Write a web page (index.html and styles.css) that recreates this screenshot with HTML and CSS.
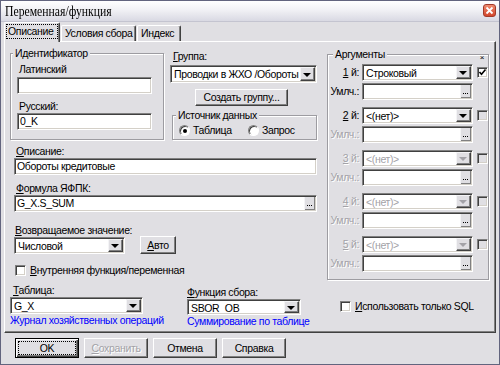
FILE: index.html
```html
<!DOCTYPE html>
<html>
<head>
    <meta charset="utf-8">
    <title>Переменная/функция</title>
    <link rel="stylesheet" href="styles.css">
</head>
<body>
    <div class="window">
        <div class="titlebar">
            <span class="title">Переменная/функция</span>
            <span class="close-btn">
                <svg viewBox="0 0 13 13" width="13" height="13"><path d="M3.5 3.5l6 6M9.5 3.5l-6 6" stroke="#fff" stroke-width="1.8"/></svg>
            </span>
        </div>

        <div class="client">
            <div class="tabs">
                <div class="tab active"><span class="focus">Описание</span></div>
                <div class="tab tab-cond">Условия сбора</div>
                <div class="tab tab-index">Индекс</div>
            </div>

            <div class="panel">
                <div class="col-left">
                    <div class="top">
                        <fieldset class="group ident">
                            <legend>Идентификатор</legend>
                            <div class="label ident-lbl">Латинский</div>
                            <div class="edit ident-edit"></div>
                            <div class="label ident-lbl ru">Русский:</div>
                            <div class="edit ident-edit">0_K</div>
                        </fieldset>

                        <div class="group-col">
                            <div class="label grp-lbl"><u>Г</u>руппа:</div>
                            <div class="combo grp-combo">
                                <span class="value">Проводки в ЖХО /Обороты</span>
                                <span class="drop"></span>
                            </div>
                            <div class="btn btn-create">Создать группу...</div>
                            <fieldset class="group source">
                                <legend>Источник данных</legend>
                                <div class="radios">
                                    <span class="radio checked"></span><span class="radio-text first">Таблица</span>
                                    <span class="radio"></span><span class="radio-text">Запрос</span>
                                </div>
                            </fieldset>
                        </div>
                    </div>

                    <div class="label field-lbl desc-lbl"><u>О</u>писание:</div>
                    <div class="edit wide">Обороты кредитовые</div>

                    <div class="label field-lbl formula-lbl"><u>Ф</u>ормула ЯФПК:</div>
                    <div class="edit wide with-btn">
                        <span class="value">G_X.S_SUM</span>
                        <span class="dots"></span>
                    </div>

                    <div class="label field-lbl ret-lbl"><u>В</u>озвращаемое значение:</div>
                    <div class="ret-row">
                        <div class="combo ret-combo">
                            <span class="value">Числовой</span>
                            <span class="drop"></span>
                        </div>
                        <div class="btn btn-auto"><span><u>А</u>вто</span></div>
                    </div>

                    <div class="check-row inner-check">
                        <span class="check"></span>
                        <span><u>В</u>нутренняя функция/переменная</span>
                    </div>

                    <div class="bottom">
                        <div class="table-col">
                            <div class="label"><u>Т</u>аблица:</div>
                            <div class="combo table-combo">
                                <span class="value">G_X</span>
                                <span class="drop"></span>
                            </div>
                            <div class="link">Журнал хозяйственных операций</div>
                        </div>
                        <div class="func-col">
                            <div class="label"><u>Ф</u>ункция сбора:</div>
                            <div class="combo func-combo">
                                <span class="value">SBOR_OB</span>
                                <span class="drop"></span>
                            </div>
                            <div class="link">Суммирование по таблице</div>
                        </div>
                    </div>
                </div>

                <div class="col-right">
                    <fieldset class="group args">
                        <legend>Аргументы</legend>
                        <div class="col-mark">×</div>

                        <div class="arg-row">
                            <span class="arg-label"><u>1</u> й:</span>
                            <div class="combo arg-field"><span class="value">Строковый</span><span class="drop"></span></div>
                            <span class="check small">
                                <svg viewBox="0 0 9 9" width="9" height="9"><path d="M1.5 4l2 2.2L7.5 1.5" fill="none" stroke="#000" stroke-width="1.6"/></svg>
                            </span>
                        </div>
                        <div class="arg-row def">
                            <span class="arg-label">Умлч.:</span>
                            <div class="edit arg-field with-btn"><span class="value"></span><span class="dots"></span></div>
                        </div>

                        <div class="arg-row">
                            <span class="arg-label"><u>2</u> й:</span>
                            <div class="combo arg-field"><span class="value">&lt;(нет)&gt;</span><span class="drop"></span></div>
                            <span class="check small off"></span>
                        </div>
                        <div class="arg-row def">
                            <span class="arg-label disabled">Умлч.:</span>
                            <div class="edit arg-field with-btn"><span class="value"></span><span class="dots"></span></div>
                        </div>

                        <div class="arg-row">
                            <span class="arg-label disabled"><u>3</u> й:</span>
                            <div class="combo arg-field dim"><span class="value">&lt;(нет)&gt;</span><span class="drop"></span></div>
                            <span class="check small off"></span>
                        </div>
                        <div class="arg-row def">
                            <span class="arg-label disabled">Умлч.:</span>
                            <div class="edit arg-field with-btn"><span class="value"></span><span class="dots"></span></div>
                        </div>

                        <div class="arg-row">
                            <span class="arg-label disabled"><u>4</u> й:</span>
                            <div class="combo arg-field dim"><span class="value">&lt;(нет)&gt;</span><span class="drop"></span></div>
                            <span class="check small off"></span>
                        </div>
                        <div class="arg-row def">
                            <span class="arg-label disabled">Умлч.:</span>
                            <div class="edit arg-field with-btn"><span class="value"></span><span class="dots"></span></div>
                        </div>

                        <div class="arg-row">
                            <span class="arg-label disabled"><u>5</u> й:</span>
                            <div class="combo arg-field dim"><span class="value">&lt;(нет)&gt;</span><span class="drop"></span></div>
                            <span class="check small off"></span>
                        </div>
                        <div class="arg-row def">
                            <span class="arg-label disabled">Умлч.:</span>
                            <div class="edit arg-field with-btn"><span class="value"></span><span class="dots"></span></div>
                        </div>
                    </fieldset>

                    <div class="check-row sql-check">
                        <span class="check"></span>
                        <span><u>И</u>спользовать только SQL</span>
                    </div>
                </div>
            </div>

            <div class="buttons">
                <div class="btn btn-main default">OK</div>
                <div class="btn btn-main disabled"><span><u>С</u>охранить</span></div>
                <div class="btn btn-main">Отмена</div>
                <div class="btn btn-main">Справка</div>
            </div>
        </div>
    </div>
</body>
</html>
```

FILE: styles.css
```css
* {
    margin: 0;
    padding: 0;
    box-sizing: border-box;
}

html, body {
    width: 500px;
    height: 365px;
    overflow: hidden;
}

body {
    font-family: "Liberation Sans", Arial, sans-serif;
    font-size: 10.5px;
    letter-spacing: -0.35px;
    line-height: 13px;
    color: #000;
    background: #e0dfe3;
}

u {
    text-decoration: underline;
    text-underline-offset: 1px;
}

/* Window frame */
.window {
    width: 500px;
    height: 365px;
    border: 1px solid #62647e;
    background: #e0dfe3;
    display: flex;
    flex-direction: column;
}

.titlebar {
    height: 21px;
    flex: none;
    display: flex;
    align-items: center;
    justify-content: space-between;
    padding: 0 3px 1px 4px;
    background: linear-gradient(#ffffff, #f1f1f5 45%, #d9d9e3);
    border-bottom: 1px solid #c4c4d0;
}

.title {
    font-family: "Liberation Serif", "Times New Roman", serif;
    font-size: 15px;
    letter-spacing: 0;
    line-height: 18px;
    color: #000;
    display: inline-block;
    transform: scaleX(0.78);
    transform-origin: left center;
}

.close-btn {
    width: 13px;
    height: 13px;
    border-radius: 3px;
    border: 1px solid #a33a2a;
    background: linear-gradient(#ef8c70, #d2452b);
    display: flex;
    align-items: center;
    justify-content: center;
    overflow: hidden;
}

.close-btn svg {
    display: block;
    margin: -1px;
}

.client {
    flex: 1;
    padding: 0 3px;
    display: flex;
    flex-direction: column;
}

/* Tabs */
.tabs {
    height: 19px;
    display: flex;
    align-items: flex-end;
    position: relative;
    z-index: 1;
}

.tab {
    height: 16px;
    padding: 0 3px;
    background: #e0dfe3;
    border: 1px solid;
    border-color: #fff #404040 transparent #fff;
    border-bottom: none;
    border-radius: 2px 2px 0 0;
    box-shadow: inset -1px 0 #808080;
    line-height: 14px;
    white-space: nowrap;
}

.tab.active {
    width: 56px;
    height: 20px;
    margin-bottom: -1px;
    padding: 2px 2px 0 2px;
}

.tab .focus {
    display: block;
    outline: 1px dotted #000;
    padding: 0 1px;
    line-height: 13px;
}

.tab-cond {
    margin-left: 1px;
    width: 75px;
}

.tab-index {
    margin-left: 1px;
    width: 44px;
}

/* Tab page */
.panel {
    height: 292px;
    flex: none;
    border: 1px solid;
    border-color: #fff #404040 #404040 #fff;
    box-shadow: inset -1px -1px #808080;
    padding: 5px 5px 0 5px;
    display: grid;
    grid-template-columns: 307px 163px;
    column-gap: 10px;
    align-items: start;
}

.label {
    height: 13px;
    white-space: nowrap;
}

/* Group boxes */
.group {
    border: 1px solid #9d9ca1;
    box-shadow: inset 1px 1px #fff, 1px 1px #fff;
    padding: 0;
    min-width: 0;
}

.group legend {
    padding: 0 2px;
    line-height: 13px;
    background: #e0dfe3;
}

/* Edits and combos */
.edit {
    height: 17px;
    background: #fff;
    border: 1px solid;
    border-color: #808080 #fff #fff #808080;
    box-shadow: inset 1px 1px #404040, inset -1px -1px #d4d0c8;
    padding: 0 2px;
    line-height: 15px;
    white-space: nowrap;
    overflow: hidden;
}

.edit.with-btn {
    display: flex;
    padding: 1px 1px 1px 2px;
}

.edit .value,
.combo .value {
    flex: 1;
    overflow: hidden;
    white-space: nowrap;
}

.edit.with-btn .value {
    line-height: 13px;
}

/* "..." browse button */
.dots {
    width: 11px;
    position: relative;
    background: #e0dfe3;
    border-left: 1px solid #f4f4f6;
    box-shadow: inset -1px -1px #808080;
}

.dots::after {
    content: "";
    position: absolute;
    left: 2px;
    bottom: 4px;
    width: 1px;
    height: 1px;
    background: #000;
    box-shadow: 2px 0 #000, 4px 0 #000;
}

.combo {
    display: flex;
    height: 18px;
    background: #fff;
    border: 1px solid;
    border-color: #808080 #fff #fff #808080;
    box-shadow: inset 1px 1px #404040, inset -1px -1px #d4d0c8;
    padding: 1px;
}

.combo .value {
    padding-left: 2px;
    line-height: 14px;
}

.drop {
    width: 15px;
    background: #e0dfe3;
    border: 1px solid;
    border-color: #f4f4f6 #404040 #404040 #f4f4f6;
    box-shadow: inset -1px -1px #808080;
    display: flex;
    align-items: center;
    justify-content: center;
}

.drop::after {
    content: "";
    border-left: 4px solid transparent;
    border-right: 4px solid transparent;
    border-top: 4px solid #000;
    margin: 1px 1px 0 0;
}

.combo.dim .value {
    color: #a3a2a7;
}

.combo.dim .drop::after {
    border-top-color: #a3a2a7;
}

/* Buttons */
.btn {
    height: 17px;
    background: #e0dfe3;
    border: 1px solid;
    border-color: #fff #404040 #404040 #fff;
    box-shadow: inset -1px -1px #808080;
    display: flex;
    align-items: center;
    justify-content: center;
    white-space: nowrap;
}

.btn.disabled {
    color: #a3a2a7;
    text-shadow: 1px 1px #fff;
}

.btn.default {
    border-color: #000;
    box-shadow: inset 1px 1px #fff, inset -1px -1px #404040, inset -2px -2px #808080;
    outline: 1px dotted #000;
    outline-offset: -4px;
}

/* Check boxes and radios */
.check {
    width: 11px;
    height: 11px;
    flex: none;
    background: #fff;
    border: 1px solid;
    border-color: #808080 #fff #fff #808080;
    box-shadow: inset 1px 1px #404040, inset -1px -1px #d4d0c8;
    display: flex;
    align-items: center;
    justify-content: center;
}

.check.off {
    background: #e0dfe3;
}

.check-row {
    display: flex;
    align-items: center;
    height: 14px;
    white-space: nowrap;
}

.radio {
    width: 11px;
    height: 11px;
    flex: none;
    border-radius: 50%;
    background: #fff;
    border: 1px solid;
    border-color: #808080 #fff #fff #808080;
    box-shadow: inset 1px 1px #404040;
    display: flex;
    align-items: center;
    justify-content: center;
}

.radio.checked::after {
    content: "";
    width: 4px;
    height: 4px;
    border-radius: 50%;
    background: #000;
}

.link {
    color: #0000ff;
    white-space: nowrap;
}

/* Left column */
.top {
    display: grid;
    grid-template-columns: 154px 147px;
    column-gap: 6px;
    height: 93px;
}

.ident {
    height: 93px;
}

.ident legend {
    margin-left: 2px;
}

.ident-lbl {
    margin-top: 3px;
    padding-left: 8px;
}

.ident-lbl.ru {
    margin-top: 6px;
}

.ident-edit {
    margin: 1px 0 0 6px;
    width: 135px;
}

.ident-lbl.ru + .ident-edit {
    margin-top: 0;
}

.group-col {
    display: flex;
    flex-direction: column;
}

.grp-lbl {
    margin-top: 3px;
    padding-left: 3px;
}

.grp-combo {
    margin-top: 2px;
}

.btn-create {
    margin: 6px 0 0 25px;
    width: 93px;
}

.source {
    margin: 3px 0 0 2px;
    height: 31px;
}

.source legend {
    margin-left: 3px;
}

.radios {
    display: flex;
    align-items: center;
    margin-top: 2px;
    padding-left: 6px;
}

.radio-text {
    margin-left: 3px;
}

.radio-text.first {
    width: 55px;
}

.field-lbl {
    padding-left: 6px;
}

.desc-lbl {
    margin-top: 5px;
}

.formula-lbl {
    margin-top: 7px;
}

.ret-lbl {
    margin-top: 12px;
    padding-left: 5px;
}

.wide {
    margin-left: 4px;
    width: 303px;
}

.ret-row {
    display: flex;
    align-items: flex-start;
    margin-left: 4px;
}

.ret-combo {
    width: 111px;
    height: 17px;
}

.btn-auto {
    width: 36px;
    height: 18px;
    margin: -1px 0 0 15px;
}

.inner-check {
    margin: 9px 0 0 5px;
}

.inner-check .check {
    margin-right: 4px;
}

.bottom {
    display: flex;
    margin-top: 7px;
}

.table-col {
    width: 177px;
}

.table-col .label {
    padding-left: 3px;
}

.table-combo {
    width: 133px;
    height: 17px;
}

.func-col {
    margin-top: 2px;
}

.func-combo {
    width: 114px;
    height: 16px;
}

/* Arguments */
.args {
    height: 232px;
    margin-top: 1px;
    width: 162px;
}

.args legend {
    margin-left: 5px;
}

.col-mark {
    margin-top: -7px;
    height: 10px;
    line-height: 8px;
    font-size: 8px;
    text-align: right;
    padding-right: 4px;
}

.arg-row {
    display: flex;
    align-items: center;
    height: 17px;
}

.arg-row.def {
    margin: 2px 0 7px;
}

.arg-label {
    width: 32px;
    text-align: right;
    padding-right: 1px;
    white-space: nowrap;
}

.arg-label.disabled {
    color: #a3a2a7;
    text-shadow: 1px 1px #fff;
}

.arg-field {
    margin-left: 2px;
    width: 111px;
    height: 17px;
}

.check.small {
    margin-left: 4px;
}

.sql-check {
    margin: 19px 0 0 13px;
}

.sql-check .check {
    margin-right: 4px;
}

/* Dialog buttons */
.buttons {
    display: flex;
    gap: 5px;
    padding-left: 11px;
    margin-top: 5px;
}

.btn-main {
    width: 64px;
    height: 20px;
}
```
